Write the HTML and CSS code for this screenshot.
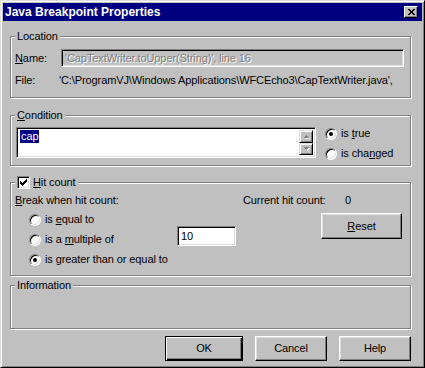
FILE: index.html
```html
<!DOCTYPE html>
<html>
<head>
<meta charset="utf-8">
<link rel="stylesheet" href="styles.css">
</head>
<body>
<div class="window">
  <div class="titlebar">
    <span class="title">Java Breakpoint Properties</span>
    <span class="close">
      <svg width="7" height="6" viewBox="0 0 7 6" shape-rendering="crispEdges">
        <path fill="#000" d="M0 0h2v1H0zM5 0h2v1H5zM1 1h2v1H1zM4 1h2v1H4zM2 2h3v2H2zM1 4h2v1H1zM4 4h2v1H4zM0 5h2v1H0zM5 5h2v1H5z"/>
      </svg>
    </span>
  </div>
  <div class="content">
    <div class="group g-location">
      <span class="gtitle">Location</span>
      <div class="name-row">
        <span class="lbl-name"><u>N</u>ame:</span>
        <span class="edit edit-disabled">'CapTextWriter.toUpper(String)', line 16</span>
      </div>
      <div class="file-row">
        <span class="lbl-file">File:</span>
        <span class="path">'C:\ProgramVJ\Windows Applications\WFCEcho3\CapTextWriter.java',</span>
      </div>
    </div>

    <div class="group g-condition">
      <span class="gtitle"><u>C</u>ondition</span>
      <div class="cond-row">
        <div class="textarea">
          <div class="ta-text"><span class="sel">cap</span></div>
          <div class="scroll">
            <span class="sbtn"><svg width="5" height="3" viewBox="0 0 5 3" shape-rendering="crispEdges"><path fill="#808080" d="M2 0h1v1H2zM1 1h3v1H1zM0 2h5v1H0z"/></svg></span>
            <span class="sbtn"><svg width="5" height="3" viewBox="0 0 5 3" shape-rendering="crispEdges"><path fill="#808080" d="M0 0h5v1H0zM1 1h3v1H1zM2 2h1v1H2z"/></svg></span>
          </div>
        </div>
        <div class="radios cond-radios">
          <div class="radio-row"><span class="radio checked"></span><span>is <u>t</u>rue</span></div>
          <div class="radio-row"><span class="radio"></span><span>is cha<u>n</u>ged</span></div>
        </div>
      </div>
    </div>

    <div class="group g-hit">
      <span class="gtitle hit-title">
        <span class="checkbox">
          <svg width="7" height="7" viewBox="0 0 7 7" shape-rendering="crispEdges"><path fill="#000" d="M6 0h1v1H6zM5 1h2v1H5zM0 2h1v1H0zM4 2h3v1H4zM0 3h2v1H0zM3 3h3v1H3zM0 4h5v1H0zM1 5h3v1H1zM2 6h1v1H2z"/></svg>
        </span>
        <span><u>H</u>it count</span>
      </span>
      <div class="hit-top">
        <span class="break-lbl"><u>B</u>reak when hit count:</span>
        <span class="cur-lbl">Current hit count:</span>
        <span>0</span>
      </div>
      <div class="hit-body">
        <div class="radios hit-radios">
          <div class="radio-row"><span class="radio"></span><span>is <u>e</u>qual to</span></div>
          <div class="radio-row"><span class="radio"></span><span>is a <u>m</u>ultiple of</span></div>
          <div class="radio-row"><span class="radio checked"></span><span>is <u>g</u>reater than or equal to</span></div>
        </div>
        <span class="edit edit-count">10</span>
        <span class="btn btn-reset"><span><u>R</u>eset</span></span>
      </div>
    </div>

    <div class="group g-info">
      <span class="gtitle">Information</span>
    </div>

    <div class="buttons">
      <span class="btn btn-default">OK</span>
      <span class="btn">Cancel</span>
      <span class="btn">Help</span>
    </div>
  </div>
</div>
</body>
</html>
```

FILE: styles.css
```css
* { box-sizing: border-box; }
html, body { margin: 0; padding: 0; }
body {
  width: 425px;
  height: 368px;
  background: #c0c0c0;
  font-family: "Liberation Sans", Arial, sans-serif;
  font-size: 11px;
  letter-spacing: -0.1px;
  color: #000;
  line-height: 13px;
}
u { text-underline-offset: 1px; }

.window {
  width: 425px;
  height: 368px;
  background: #c0c0c0;
  border: 1px solid;
  border-color: #dfdfdf #000 #000 #dfdfdf;
  box-shadow: inset 1px 1px #fff, inset -1px -1px #808080;
  padding: 2px;
  display: flex;
  flex-direction: column;
}
.titlebar {
  height: 18px;
  flex: none;
  background: #000080;
  color: #fff;
  display: flex;
  align-items: center;
  justify-content: space-between;
  padding: 0 4px 0 2px;
}
.title {
  font-weight: bold;
  font-size: 12px;
  letter-spacing: 0;
}
.close {
  width: 14px;
  height: 12px;
  background: #c0c0c0;
  border: 1px solid;
  border-color: #fff #000 #000 #fff;
  box-shadow: inset -1px -1px #808080;
  display: flex;
  align-items: center;
  justify-content: center;
}
.close svg { display: block; }

.content {
  padding-left: 7px;
  display: flex;
  flex-direction: column;
}

.group {
  width: 401px;
  border: 1px solid #808080;
  box-shadow: 1px 1px 0 #fff, inset 1px 1px 0 #fff;
  display: flex;
  flex-direction: column;
  padding-left: 4px;
}
.gtitle {
  align-self: flex-start;
  margin-top: -8px;
  height: 15px;
  line-height: 15px;
  padding: 0 2px;
  background: #c0c0c0;
}

/* Location */
.g-location { margin-top: 15px; padding-bottom: 10px; }
.name-row {
  display: flex;
  align-items: center;
  margin-top: 5px;
}
.lbl-name { width: 46px; flex: none; }
.edit {
  display: block;
  border: 1px solid;
  border-color: #808080 #fff #fff #808080;
  box-shadow: inset 1px 1px #000, inset -1px -1px #dfdfdf;
  background: #fff;
  padding: 0 3px;
  white-space: nowrap;
  overflow: hidden;
}
.edit-disabled {
  width: 343px;
  height: 18px;
  line-height: 16px;
  background: #c0c0c0;
  color: #808080;
  text-shadow: 1px 1px 0 #fff;
}
.file-row {
  display: flex;
  margin-top: 7px;
}
.lbl-file { width: 44px; flex: none; }
.path { white-space: nowrap; }

/* Condition */
.g-condition { margin-top: 17px; padding-bottom: 5px; }
.cond-row {
  display: flex;
  margin-top: 4px;
}
.textarea {
  margin-left: 1px;
  width: 300px;
  height: 31px;
  background: #fff;
  border: 1px solid;
  border-color: #808080 #fff #fff #808080;
  box-shadow: inset 1px 1px #000, inset -1px -1px #dfdfdf;
  padding: 2px;
  display: flex;
}
.ta-text { flex: 1; padding-left: 1px; }
.sel {
  background: #000080;
  color: #fff;
  padding: 0 1px;
  line-height: 13px;
  display: inline-block;
}
.scroll {
  width: 14px;
  display: flex;
  flex-direction: column;
}
.sbtn {
  flex: 1;
  background: #c0c0c0;
  border: 1px solid;
  border-color: #dfdfdf #000 #000 #dfdfdf;
  box-shadow: inset 1px 1px #fff, inset -1px -1px #808080;
  display: flex;
  align-items: center;
  justify-content: center;
}
.sbtn svg { display: block; filter: drop-shadow(1px 1px 0 #fff); }

.radios {
  display: flex;
  flex-direction: column;
  gap: 7px;
}
.cond-radios { margin-left: 9px; }
.radio-row {
  display: flex;
  align-items: center;
  height: 13px;
  gap: 4px;
  white-space: nowrap;
}
.radio {
  width: 12px;
  height: 12px;
  flex: none;
  border-radius: 50%;
  background: #fff;
  border: 1px solid;
  border-color: #808080 #fff #fff #808080;
  box-shadow: inset 1px 1px 0 #000, inset -1px -1px 0 #dfdfdf;
  display: flex;
  align-items: center;
  justify-content: center;
}
.radio.checked::after {
  content: "";
  width: 4px;
  height: 4px;
  border-radius: 50%;
  background: #000;
}

/* Hit count */
.g-hit { margin-top: 16px; padding-bottom: 9px; }
.hit-title {
  display: flex;
  align-items: center;
  gap: 3px;
}
.checkbox {
  width: 13px;
  height: 13px;
  background: #fff;
  border: 1px solid;
  border-color: #808080 #fff #fff #808080;
  box-shadow: inset 1px 1px 0 #000, inset -1px -1px 0 #dfdfdf;
  display: flex;
  align-items: center;
  justify-content: center;
}
.checkbox svg { display: block; }
.hit-top {
  display: flex;
  margin-top: 4px;
}
.break-lbl { width: 228px; flex: none; }
.cur-lbl { width: 102px; flex: none; }
.hit-body {
  display: flex;
  align-items: flex-start;
}
.hit-radios {
  margin-left: 14px;
  margin-top: 6px;
  width: 148px;
}
.edit-count {
  margin-top: 19px;
  width: 59px;
  height: 20px;
  line-height: 18px;
}
.btn {
  display: flex;
  align-items: center;
  justify-content: center;
  background: #c0c0c0;
  border: 1px solid;
  border-color: #fff #000 #000 #fff;
  box-shadow: inset -1px -1px #808080, inset 1px 1px #dfdfdf;
}
.btn-reset {
  margin-left: 85px;
  margin-top: 6px;
  width: 81px;
  height: 26px;
}

/* Information */
.g-info { margin-top: 9px; padding-bottom: 35px; }

/* Buttons */
.buttons {
  display: flex;
  gap: 12px;
  margin-top: 7px;
  margin-left: 155px;
}
.buttons .btn {
  width: 72px;
  height: 25px;
}
.buttons .btn-default {
  width: 78px;
  border: 1px solid #000;
  box-shadow: inset 1px 1px #fff, inset -1px -1px #000, inset -2px -2px #808080;
}
```
